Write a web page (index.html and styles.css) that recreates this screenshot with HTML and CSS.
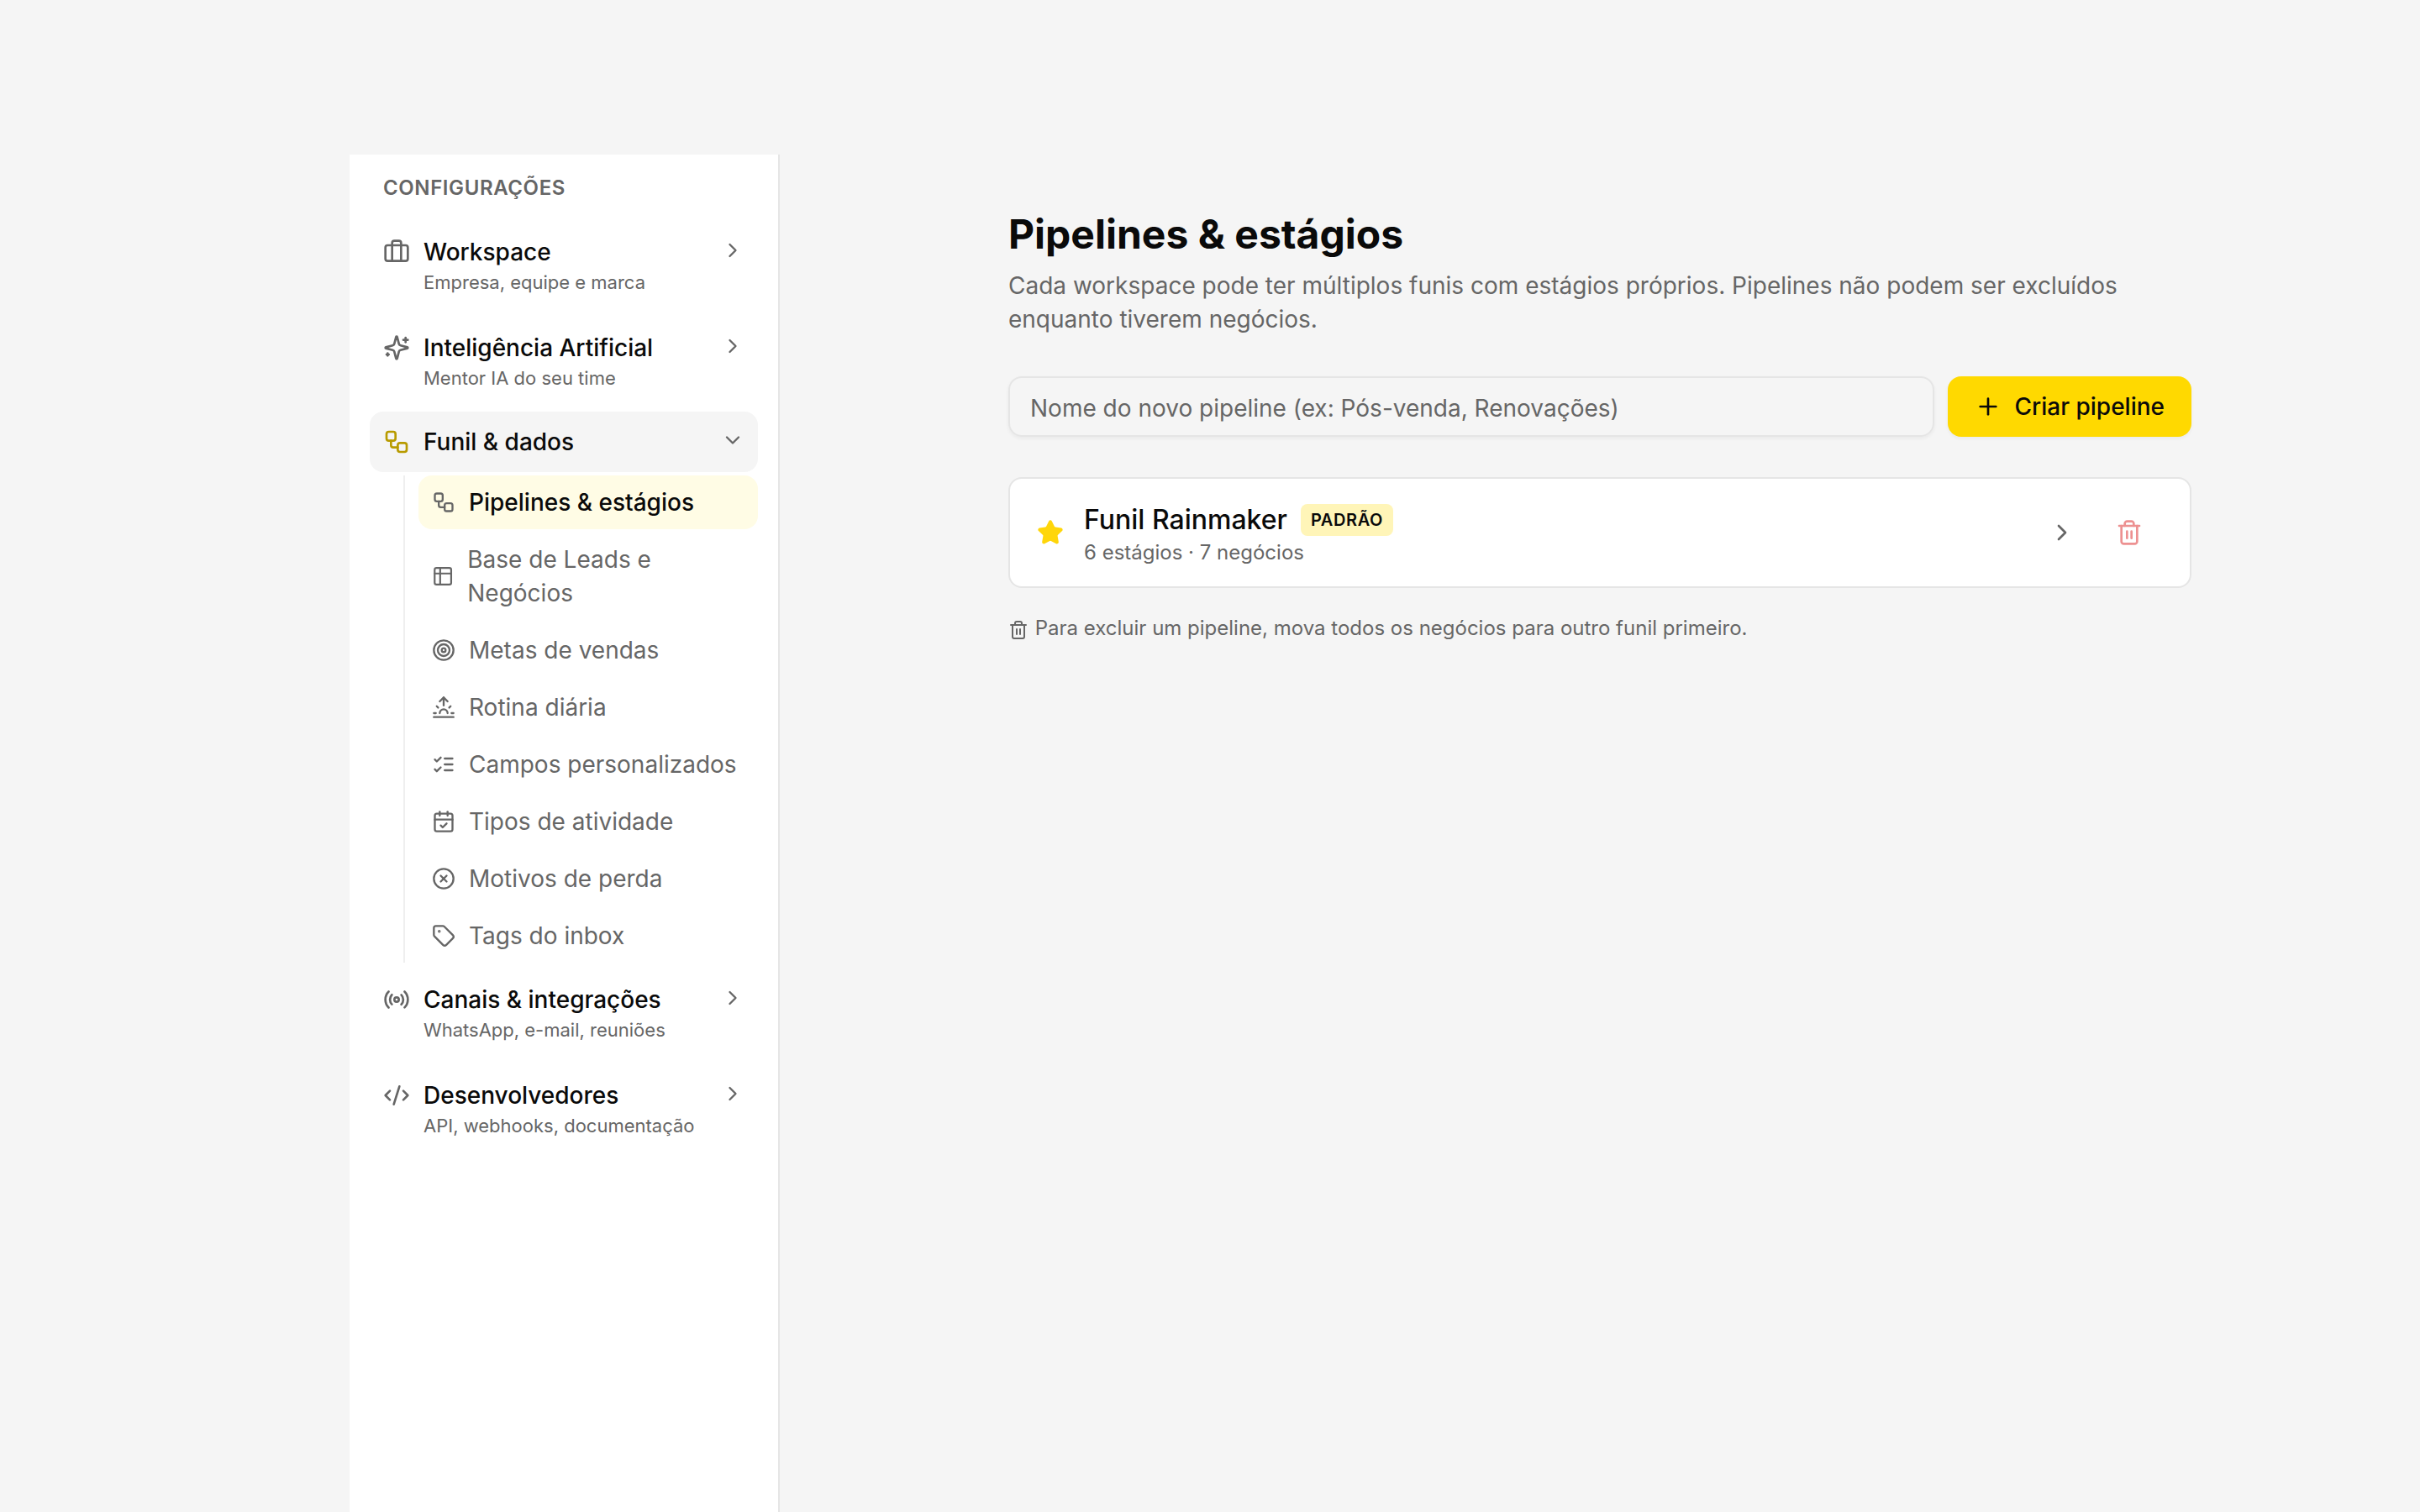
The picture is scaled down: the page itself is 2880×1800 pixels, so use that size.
FILE: index.html
```
<!DOCTYPE html>
<html lang="pt-BR">
<head>
  <meta charset="UTF-8">
  <title>Pipelines &amp; estágios</title>
  <link rel="stylesheet" href="styles.css">
</head>
<body>

  <!-- shared icons -->
  <svg class="sprite" width="0" height="0">
    <symbol id="chevron-right" viewBox="0 0 24 24"><path d="m9 18 6-6-6-6"/></symbol>
    <symbol id="chevron-down" viewBox="0 0 24 24"><path d="m6 9 6 6 6-6"/></symbol>
    <symbol id="workflow" viewBox="0 0 24 24">
      <rect width="8" height="8" x="3" y="3" rx="2"/>
      <path d="M7 11v4a2 2 0 0 0 2 2h4"/>
      <rect width="8" height="8" x="13" y="13" rx="2"/>
    </symbol>
    <symbol id="trash" viewBox="0 0 24 24">
      <path d="M3 6h18"/>
      <path d="M19 6v14c0 1-1 2-2 2H7c-1 0-2-1-2-2V6"/>
      <path d="M8 6V4c0-1 1-2 2-2h4c1 0 2 1 2 2v2"/>
      <path d="M10 11v6"/>
      <path d="M14 11v6"/>
    </symbol>
  </svg>

  <div class="layout">
    <aside class="sidebar">
      <p class="sidebar-title">Configurações</p>

      <nav class="menu">
        <a class="group">
          <svg class="icon" viewBox="0 0 24 24"><path d="M16 20V4a2 2 0 0 0-2-2h-4a2 2 0 0 0-2 2v16"/><rect width="20" height="14" x="2" y="6" rx="2"/></svg>
          <span class="group-text">
            <span class="group-name">Workspace</span>
            <span class="group-hint">Empresa, equipe e marca</span>
          </span>
          <svg class="chevron"><use href="#chevron-right"/></svg>
        </a>

        <a class="group">
          <svg class="icon" viewBox="0 0 24 24"><path d="M9.937 15.5A2 2 0 0 0 8.5 14.063l-6.135-1.582a.5.5 0 0 1 0-.962L8.5 9.936A2 2 0 0 0 9.937 8.5l1.582-6.135a.5.5 0 0 1 .963 0L14.063 8.5A2 2 0 0 0 15.5 9.937l6.135 1.581a.5.5 0 0 1 0 .964L15.5 14.063a2 2 0 0 0-1.437 1.437l-1.582 6.135a.5.5 0 0 1-.963 0z"/><path d="M20 3v4"/><path d="M22 5h-4"/><path d="M4 17v2"/><path d="M5 18H3"/></svg>
          <span class="group-text">
            <span class="group-name">Inteligência Artificial</span>
            <span class="group-hint">Mentor IA do seu time</span>
          </span>
          <svg class="chevron"><use href="#chevron-right"/></svg>
        </a>

        <div class="group-open">
          <a class="group active">
            <svg class="icon"><use href="#workflow"/></svg>
            <span class="group-text">
              <span class="group-name">Funil &amp; dados</span>
            </span>
            <svg class="chevron"><use href="#chevron-down"/></svg>
          </a>

          <div class="submenu">
            <a class="item selected">
              <svg><use href="#workflow"/></svg>
              <span>Pipelines &amp; estágios</span>
            </a>
            <a class="item">
              <svg viewBox="0 0 24 24"><path d="M9 3v18"/><rect width="18" height="18" x="3" y="3" rx="2"/><path d="M3 9h18"/></svg>
              <span>Base de Leads e Negócios</span>
            </a>
            <a class="item">
              <svg viewBox="0 0 24 24"><circle cx="12" cy="12" r="10"/><circle cx="12" cy="12" r="6"/><circle cx="12" cy="12" r="2"/></svg>
              <span>Metas de vendas</span>
            </a>
            <a class="item">
              <svg viewBox="0 0 24 24"><path d="M12 2v8"/><path d="m4.93 10.93 1.41 1.41"/><path d="M2 18h2"/><path d="M20 18h2"/><path d="m19.07 10.93-1.41 1.41"/><path d="M22 22H2"/><path d="m8 6 4-4 4 4"/><path d="M16 18a4 4 0 0 0-8 0"/></svg>
              <span>Rotina diária</span>
            </a>
            <a class="item">
              <svg viewBox="0 0 24 24"><path d="m3 17 2 2 4-4"/><path d="m3 7 2 2 4-4"/><path d="M13 6h8"/><path d="M13 12h8"/><path d="M13 18h8"/></svg>
              <span>Campos personalizados</span>
            </a>
            <a class="item">
              <svg viewBox="0 0 24 24"><path d="M8 2v4"/><path d="M16 2v4"/><rect width="18" height="18" x="3" y="4" rx="2"/><path d="M3 10h18"/><path d="m9 16 2 2 4-4"/></svg>
              <span>Tipos de atividade</span>
            </a>
            <a class="item">
              <svg viewBox="0 0 24 24"><circle cx="12" cy="12" r="10"/><path d="m15 9-6 6"/><path d="m9 9 6 6"/></svg>
              <span>Motivos de perda</span>
            </a>
            <a class="item">
              <svg viewBox="0 0 24 24"><path d="M12.586 2.586A2 2 0 0 0 11.172 2H4a2 2 0 0 0-2 2v7.172a2 2 0 0 0 .586 1.414l8.704 8.704a2.426 2.426 0 0 0 3.42 0l6.58-6.58a2.426 2.426 0 0 0 0-3.42z"/><circle class="dot" cx="7.5" cy="7.5" r=".5"/></svg>
              <span>Tags do inbox</span>
            </a>
          </div>
        </div>

        <a class="group">
          <svg class="icon" viewBox="0 0 24 24"><path d="M4.9 19.1C1 15.2 1 8.8 4.9 4.9"/><path d="M7.8 16.2c-2.3-2.3-2.3-6.1 0-8.5"/><circle cx="12" cy="12" r="2"/><path d="M16.2 7.8c2.3 2.3 2.3 6.1 0 8.5"/><path d="M19.1 4.9C23 8.8 23 15.1 19.1 19"/></svg>
          <span class="group-text">
            <span class="group-name">Canais &amp; integrações</span>
            <span class="group-hint">WhatsApp, e-mail, reuniões</span>
          </span>
          <svg class="chevron"><use href="#chevron-right"/></svg>
        </a>

        <a class="group">
          <svg class="icon" viewBox="0 0 24 24"><path d="m18 16 4-4-4-4"/><path d="m6 8-4 4 4 4"/><path d="m14.5 4-5 16"/></svg>
          <span class="group-text">
            <span class="group-name">Desenvolvedores</span>
            <span class="group-hint">API, webhooks, documentação</span>
          </span>
          <svg class="chevron"><use href="#chevron-right"/></svg>
        </a>
      </nav>
    </aside>

    <main class="content">
      <h1>Pipelines &amp; estágios</h1>
      <p class="description">Cada workspace pode ter múltiplos funis com estágios próprios. Pipelines não podem ser excluídos enquanto tiverem negócios.</p>

      <form class="new-pipeline">
        <input type="text" placeholder="Nome do novo pipeline (ex: Pós-venda, Renovações)">
        <button type="button">
          <svg viewBox="0 0 24 24"><path d="M5 12h14"/><path d="M12 5v14"/></svg>
          Criar pipeline
        </button>
      </form>

      <div class="card">
        <svg class="star" viewBox="0 0 24 24"><path d="M11.525 2.295a.53.53 0 0 1 .95 0l2.31 4.679a2.123 2.123 0 0 0 1.595 1.16l5.166.756a.53.53 0 0 1 .294.904l-3.736 3.638a2.123 2.123 0 0 0-.611 1.878l.882 5.14a.53.53 0 0 1-.771.56l-4.618-2.428a2.122 2.122 0 0 0-1.973 0L6.396 21.01a.53.53 0 0 1-.77-.56l.881-5.139a2.122 2.122 0 0 0-.611-1.879L2.16 9.795a.53.53 0 0 1 .294-.906l5.165-.755a2.122 2.122 0 0 0 1.597-1.16z"/></svg>
        <div class="card-text">
          <div class="card-head">
            <span class="card-name">Funil Rainmaker</span>
            <span class="badge">Padrão</span>
          </div>
          <p class="card-meta">6 estágios · 7 negócios</p>
        </div>
        <div class="card-actions">
          <span class="action"><svg><use href="#chevron-right"/></svg></span>
          <span class="action delete"><svg><use href="#trash"/></svg></span>
        </div>
      </div>

      <p class="note"><svg><use href="#trash"/></svg> Para excluir um pipeline, mova todos os negócios para outro funil primeiro.</p>
    </main>
  </div>

</body>
</html>
```
FILE: styles.css
```
* {
  box-sizing: border-box;
}
body {
  font-family: Inter, sans-serif;
  font-size: 28px;
  line-height: 40px;
  background: #f5f5f5;
  color: #0a0a0a;
  margin: 0;
}
h1, p {
  margin: 0;
}
svg {
  fill: none;
  stroke: currentColor;
  stroke-width: 2;
  stroke-linecap: round;
  stroke-linejoin: round;
}
.sprite {
  display: none;
}
.layout {
  display: flex;
  height: 1800px;
  padding-top: 184px;
  padding-left: 416px;
}

/* Sidebar */
.sidebar {
  width: 512px;
  flex-shrink: 0;
  background: #ffffff;
  border-right: 2px solid #e5e5e5;
  padding: 24px;
}
.sidebar-title {
  font-size: 24px;
  line-height: 32px;
  font-weight: 600;
  letter-spacing: 0.6px;
  text-transform: uppercase;
  color: #666666;
  padding: 0 16px;
  margin-bottom: 24px;
}
.menu {
  display: flex;
  flex-direction: column;
  gap: 8px;
}
.group {
  display: flex;
  align-items: flex-start;
  gap: 16px;
  padding: 16px;
  border-radius: 16px;
}
.group .icon, .group .chevron {
  flex-shrink: 0;
  width: 32px;
  height: 32px;
  margin-top: 4px;
  color: #666666;
}
.group .chevron {
  width: 28px;
  height: 28px;
}
.group-text {
  flex: 1;
}
.group-name {
  display: block;
  font-weight: 500;
}
.group-hint {
  display: block;
  font-size: 22px;
  line-height: 32px;
  padding-bottom: 2px;
  color: #666666;
}
.group-open {
  margin-top: -2px;
}
.group.active {
  background: #f5f5f5;
}
.group.active .icon {
  color: #b89b00;
}
.submenu {
  display: flex;
  flex-direction: column;
  gap: 4px;
  margin: 4px 0 0 40px;
  padding-left: 16px;
  border-left: 2px solid #efefef;
}
.item {
  display: flex;
  align-items: center;
  gap: 16px;
  padding: 12px 16px;
  border-radius: 16px;
  color: #666666;
}
.item svg {
  width: 28px;
  height: 28px;
}
.item .dot {
  fill: currentColor;
}
.item.selected {
  background: #fffce5;
  font-weight: 500;
}
.item.selected span {
  color: #0a0a0a;
}

/* Main content */
.content {
  width: 1408px;
  flex-shrink: 0;
  margin-left: 272px;
  padding-top: 63px;
}
h1 {
  font-size: 48px;
  line-height: 64px;
  font-weight: 700;
}
.description {
  color: #666666;
  margin-top: 9px;
}
.new-pipeline {
  display: flex;
  gap: 16px;
  margin-top: 48px;
}
.new-pipeline input {
  flex: 1;
  height: 72px;
  font: inherit;
  background: transparent;
  border: 2px solid #e5e5e5;
  border-radius: 16px;
  padding: 4px 24px 0;
  box-shadow: 0 2px 4px rgba(0,0,0,0.05);
}
.new-pipeline input::placeholder {
  color: #666666;
}
.new-pipeline button {
  display: flex;
  align-items: center;
  gap: 16px;
  height: 72px;
  padding: 0 32px;
  font: inherit;
  font-weight: 500;
  color: #0a0a0a;
  background: #ffd900;
  border: none;
  border-radius: 16px;
  box-shadow: 0 2px 4px rgba(0,0,0,0.05);
}
.new-pipeline svg {
  width: 32px;
  height: 32px;
}
.card {
  display: flex;
  align-items: center;
  gap: 24px;
  height: 132px;
  margin-top: 48px;
  padding: 0 32px;
  background: #ffffff;
  border: 2px solid #e5e5e5;
  border-radius: 16px;
}
.star {
  width: 32px;
  height: 32px;
  color: #ffd60a;
  fill: currentColor;
}
.card-text {
  flex: 1;
  padding-top: 5px;
}
.card-head {
  display: flex;
  align-items: center;
  gap: 16px;
}
.card-name {
  font-size: 32px;
  line-height: 44px;
  font-weight: 500;
}
.badge {
  font-size: 20px;
  line-height: 30px;
  font-weight: 600;
  letter-spacing: 0.6px;
  text-transform: uppercase;
  background: #fff5b8;
  border-radius: 8px;
  padding: 4px 12px;
}
.card-meta {
  font-size: 24px;
  line-height: 36px;
  margin-top: -1px;
  color: #666666;
}
.card-actions {
  display: flex;
  color: #666666;
}
.action {
  display: flex;
  padding: 20px 24px;
}
.action svg {
  width: 32px;
  height: 32px;
}
.action.delete {
  color: #dc2626;
  opacity: 0.5;
}
.note {
  font-size: 24px;
  line-height: 36px;
  color: #666666;
  margin-top: 30px;
}
.note svg {
  width: 24px;
  height: 24px;
  margin-right: 1px;
  vertical-align: -6px;
}
```
